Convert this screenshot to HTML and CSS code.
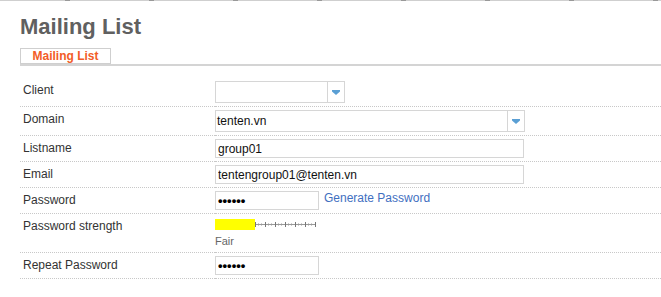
FILE: index.html
```html
<!DOCTYPE html>
<html lang="en">
<head>
  <meta charset="UTF-8" />
  <title>Mailing List</title>
  <link rel="stylesheet" href="styles.css">
</head>
<body>
  <div class="top-rule"></div>
  <div class="page">
    <h1>Mailing List</h1>
    <div class="tabs">
      <span class="tab">Mailing List</span>
    </div>

    <table class="form-table">
      <tr>
        <td class="label">Client</td>
        <td>
          <div class="select select-short">
            <span class="select-value"></span>
            <span class="select-arrow"><svg width="8" height="5" viewBox="0 0 8 5"><path d="M0 0h8v1.5L4 5 0 1.5z" fill="#5a9fd4"/></svg></span>
          </div>
        </td>
      </tr>
      <tr>
        <td class="label">Domain</td>
        <td>
          <div class="select select-long">
            <span class="select-value">tenten.vn</span>
            <span class="select-arrow"><svg width="8" height="5" viewBox="0 0 8 5"><path d="M0 0h8v1.5L4 5 0 1.5z" fill="#5a9fd4"/></svg></span>
          </div>
        </td>
      </tr>
      <tr>
        <td class="label">Listname</td>
        <td><input class="field field-long" type="text" value="group01" /></td>
      </tr>
      <tr>
        <td class="label">Email</td>
        <td><input class="field field-long" type="text" value="tentengroup01@tenten.vn" /></td>
      </tr>
      <tr>
        <td class="label">Password</td>
        <td>
          <div class="inline-row">
            <input class="field field-short pass" type="password" value="123456" />
            <a href="#" class="gen-link">Generate Password</a>
          </div>
        </td>
      </tr>
      <tr>
        <td class="label">Password strength</td>
        <td>
          <div class="strength">
            <span class="strength-bar"></span>
            <svg class="ruler" width="62" height="7" viewBox="0 0 62 7">
              <line x1="0" y1="3.5" x2="61" y2="3.5" stroke="#999" stroke-width="1"/>
              <path d="M0.5 1v5M10.5 1v5M20.5 1v5M30.5 1v5M40.5 1v5M50.5 1v5M60.5 1v5" stroke="#777" stroke-width="1"/>
              <path d="M3.5 2.5v2M6.5 2.5v2M13.5 2.5v2M16.5 2.5v2M23.5 2.5v2M26.5 2.5v2M33.5 2.5v2M36.5 2.5v2M43.5 2.5v2M46.5 2.5v2M53.5 2.5v2M56.5 2.5v2" stroke="#999" stroke-width="1"/>
            </svg>
          </div>
          <div class="strength-text">Fair</div>
        </td>
      </tr>
      <tr>
        <td class="label">Repeat Password</td>
        <td><input class="field field-short pass" type="password" value="123456" /></td>
      </tr>
    </table>
  </div>
</body>
</html>
```

FILE: styles.css
```css
body {
  margin: 0;
  font-family: 'Liberation Sans', Arial, sans-serif;
  font-size: 12px;
  color: #333;
  background: #fff;
}
.top-rule {
  height: 1px;
  background: repeating-linear-gradient(to right, #cfcfcf 0, #cfcfcf 65px, #999 65px, #999 70px, #cfcfcf 70px, #cfcfcf 84px);
}
.page {
  padding-left: 20px;
}
h1 {
  margin: 13px 0 0 0;
  font-size: 22px;
  line-height: 26px;
  font-weight: 700;
  color: #606060;
}
.tabs {
  margin-top: 8px;
  border-bottom: 2px solid #d4d4d4;
  display: flex;
}
.tab {
  width: 89px;
  height: 14px;
  border: 1px solid #cfcfcf;
  text-align: center;
  font-size: 12px;
  line-height: 14px;
  font-weight: 700;
  color: #f25c27;
}
.form-table {
  width: 100%;
  margin-top: 12px;
  border-collapse: collapse;
}
.form-table td {
  padding: 3px 0;
  border-bottom: 1px dotted #c8c8c8;
  vertical-align: top;
}
.form-table td.label {
  width: 192px;
  padding-left: 3px;
  line-height: 19px;
  color: #333;
}
.select {
  display: flex;
  height: 22px;
  box-sizing: border-box;
  border: 1px solid #d6d6d6;
  background: #fff;
}
.select-short {
  width: 130px;
}
.select-long {
  width: 310px;
}
.select-value {
  flex: 1;
  padding-left: 1px;
  line-height: 20px;
  font-size: 12px;
  color: #111;
}
.select-arrow {
  width: 16px;
  border-left: 1px solid #d6d6d6;
  display: flex;
  align-items: center;
  justify-content: center;
}
.field {
  display: block;
  height: 19px;
  box-sizing: border-box;
  margin: 0;
  padding: 0 2px;
  border: 1px solid #d6d6d6;
  font-family: 'Liberation Sans', Arial, sans-serif;
  font-size: 12px;
  color: #111;
  outline: none;
}
.field.pass {
  font-size: 13px;
  font-weight: 700;
  color: #000;
}
.field-long {
  width: 309px;
}
.field-short {
  width: 104px;
}
.inline-row {
  display: flex;
  align-items: flex-start;
}
.gen-link {
  margin-left: 5px;
  line-height: 14px;
  color: #3f6fbf;
  text-decoration: none;
}
.strength {
  display: flex;
  align-items: center;
  margin-top: 2px;
}
.strength-bar {
  width: 40px;
  height: 11px;
  background: #ffff00;
}
.ruler {
  display: block;
}
.strength-text {
  margin-top: 3px;
  font-size: 11px;
  line-height: 16px;
  color: #666;
}
```
